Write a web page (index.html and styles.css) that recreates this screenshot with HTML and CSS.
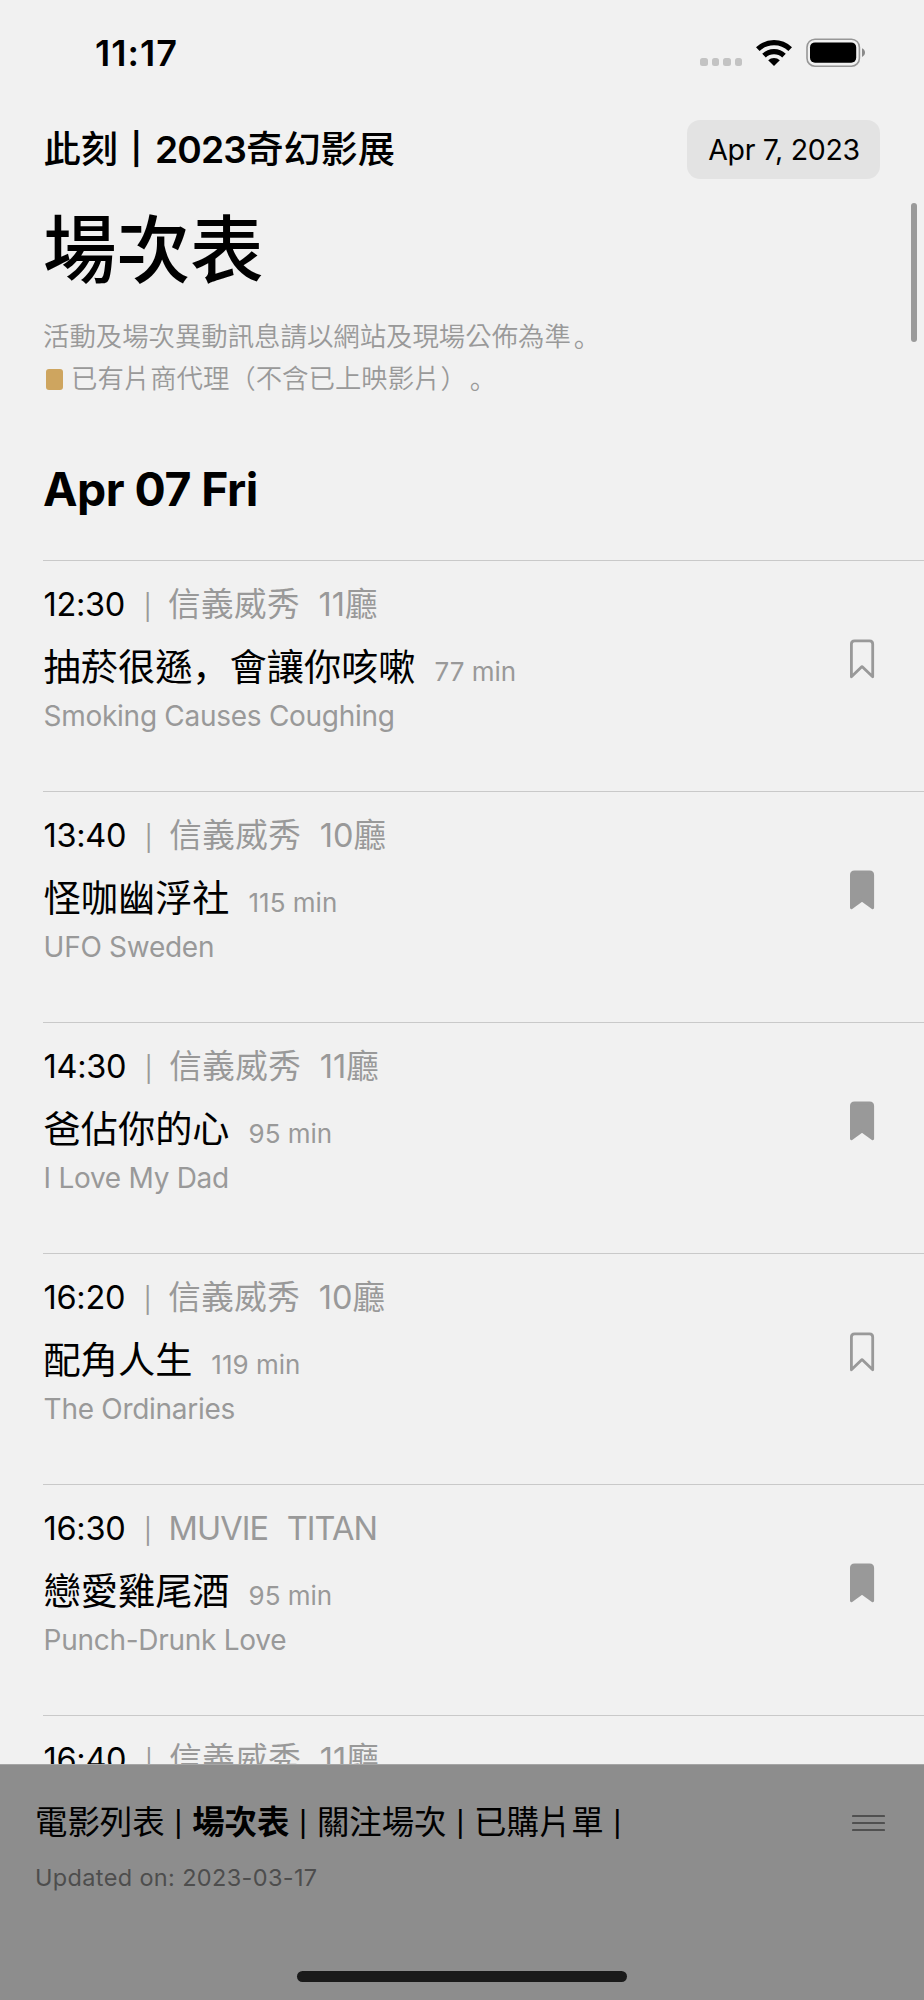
FILE: index.html
```html
<!DOCTYPE html>
<html lang="zh-Hant">
<head>
<meta charset="utf-8">
<title>場次表</title>
<link rel="stylesheet" href="styles.css">
</head>
<body>
<svg class="defs" aria-hidden="true">
  <symbol id="mark" viewBox="0 0 26 40"><path d="M2.4 37.8V5Q2.4 1.8 5.6 1.8H20.5Q23.7 1.8 23.7 5V37.8L13 27.6Z" fill="none" stroke="currentColor" stroke-width="2.8" stroke-linejoin="round"/></symbol>
  <symbol id="mark-fill" viewBox="0 0 26 40"><path d="M2.4 37.8V5Q2.4 1.8 5.6 1.8H20.5Q23.7 1.8 23.7 5V37.8L13 30.2Z" fill="currentColor" stroke="currentColor" stroke-width="2.8" stroke-linejoin="round"/></symbol>
</svg>
<div class="screen">
  <div class="status">
    <span class="clock">11:17</span>
    <span class="dots"><i></i><i></i><i></i><i></i></span>
    <svg class="wifi" viewBox="0 0 36 28"><g fill="none" stroke="#000" stroke-width="5.2"><path d="M1.8 10.2A23.5 23.5 0 0 1 34.2 10.2"/><path d="M8 16.6A14.6 14.6 0 0 1 28 16.6"/></g><path d="M12.2 21.2A8.6 8.6 0 0 1 23.8 21.2L18 27Z"/></svg>
    <svg class="battery" viewBox="0 0 60 30"><rect x="1" y="1.2" width="52.4" height="27" rx="8" fill="none" stroke="#979797" stroke-width="1.6"/><rect x="4" y="4.4" width="46.2" height="20.4" rx="5" /><path d="M56 10.2Q59 11.6 59 14.6T56 19Z" fill="#8a8a8a"/></svg>
  </div>
  <header class="head">
    <div class="brand">此刻<span class="rule">|</span><span class="year">2023</span>奇幻影展</div>
    <div class="date">Apr 7, 2023</div>
  </header>
  <h1>場次表</h1>
  <div class="note">活動及場次異動訊息請以網站及現場公佈為準<span class="sc stop" lang="zh-Hans">。</span></div>
  <div class="note"><i class="chip"></i>已有片商代理（不含已上映影片）<span class="sc stop" lang="zh-Hans">。</span></div>
  <h2>Apr 07 Fri</h2>
  <main class="list">
    <article class="item">
      <div class="slot"><span class="time">12:30</span><span class="bar">|</span><span class="hall">信義威秀</span><span class="room">11廳</span></div>
      <div class="film"><span class="name">抽菸很遜<span class="sc" lang="zh-Hans">，</span>會讓你咳嗽</span><span class="min">77 min</span></div>
      <div class="sub">Smoking Causes Coughing</div>
      <svg class="mark"><use href="#mark"/></svg>
    </article>
    <article class="item">
      <div class="slot"><span class="time">13:40</span><span class="bar">|</span><span class="hall">信義威秀</span><span class="room">10廳</span></div>
      <div class="film"><span class="name">怪咖幽浮社</span><span class="min">115 min</span></div>
      <div class="sub">UFO Sweden</div>
      <svg class="mark"><use href="#mark-fill"/></svg>
    </article>
    <article class="item">
      <div class="slot"><span class="time">14:30</span><span class="bar">|</span><span class="hall">信義威秀</span><span class="room">11廳</span></div>
      <div class="film"><span class="name">爸佔你的心</span><span class="min">95 min</span></div>
      <div class="sub">I Love My Dad</div>
      <svg class="mark"><use href="#mark-fill"/></svg>
    </article>
    <article class="item">
      <div class="slot"><span class="time">16:20</span><span class="bar">|</span><span class="hall">信義威秀</span><span class="room">10廳</span></div>
      <div class="film"><span class="name">配角人生</span><span class="min">119 min</span></div>
      <div class="sub">The Ordinaries</div>
      <svg class="mark"><use href="#mark"/></svg>
    </article>
    <article class="item">
      <div class="slot"><span class="time">16:30</span><span class="bar">|</span><span class="hall latin">MUVIE</span><span class="room latin">TITAN</span></div>
      <div class="film"><span class="name">戀愛雞尾酒</span><span class="min">95 min</span></div>
      <div class="sub">Punch-Drunk Love</div>
      <svg class="mark"><use href="#mark-fill"/></svg>
    </article>
    <article class="item">
      <div class="slot"><span class="time">16:40</span><span class="bar">|</span><span class="hall">信義威秀</span><span class="room">11廳</span></div>
    </article>
  </main>
  <footer class="foot">
    <div class="foot-row">
      <nav class="tabs"><a>電影列表</a><span>|</span><a class="on">場次表</a><span>|</span><a>關注場次</a><span>|</span><a>已購片單</a><span>|</span></nav>
      <svg class="menu" viewBox="0 0 33 18"><path d="M1 2H32M1 9H32M1 16H32" stroke="#505050" stroke-width="2.2" stroke-linecap="round"/></svg>
    </div>
    <div class="updated">Updated on: 2023-03-17</div>
    <div class="home"></div>
  </footer>
  <div class="scroll"></div>
</div>
</body>
</html>
```

FILE: styles.css
```css
* { box-sizing: border-box; }
body { margin: 0; background: #f1f1f1; color: #000; font-family: Inter, "Noto Sans CJK TC", sans-serif; }
.defs { position: absolute; width: 0; height: 0; }
.sc { font-family: "Noto Sans CJK SC", sans-serif; line-height: 1; }
.stop { margin-left: 3px; }
.screen { position: relative; width: 924px; height: 2000px; overflow: hidden; display: flex; flex-direction: column; white-space: nowrap; }

.status { flex: none; height: 120px; padding: 0 58px 0 95px; display: flex; align-items: flex-start; }
.clock { margin-top: 33px; line-height: 40px; font-size: 36px; font-weight: 600; letter-spacing: 1px; }
.dots { display: flex; gap: 4px; margin: 58px 14px 0 auto; }
.dots i { width: 7.5px; height: 8px; border-radius: 2.5px; background: #c3c3c3; }
.wifi { width: 36px; height: 28px; margin: 39px 14px 0 0; }
.battery { width: 60px; height: 30px; margin-top: 37.5px; }

.head { flex: none; height: 59px; padding: 0 44px 0 43.5px; display: flex; justify-content: space-between; align-items: center; }
.brand { line-height: 59px; font-size: 37.2px; font-weight: 500; }
.rule { display: inline-block; width: 37px; text-align: center; font-size: 31px; font-weight: 600; line-height: 1; vertical-align: 3px; }
.year { font-weight: 600; letter-spacing: -.8px; }
.date { width: 193px; height: 59px; padding-left: 1px; border-radius: 13px; background: #e3e3e3; text-align: center; line-height: 59px; font-size: 28.5px; letter-spacing: -.3px; }
h1 { flex: none; margin: 0; padding: 29px 0 0 43px; height: 136px; font-size: 73.5px; line-height: 86px; font-weight: 500; }
.note { flex: none; height: 42px; padding-left: 43px; line-height: 40px; font-size: 26.4px; font-weight: 350; color: #999; display: flex; align-items: center; }
.chip { width: 17px; height: 21px; margin: 2px 8px 0 3px; border-radius: 3px; background: #cea55f; }
h2 { flex: none; margin: 0; padding: 58px 0 0 43px; height: 161px; font-size: 46.3px; line-height: 64px; font-weight: 700; letter-spacing: -.5px; }

.list { flex: none; margin-left: 43px; }
.item { position: relative; height: 231px; border-top: 1px solid #c9c9c9; padding-left: .6px; }
.slot { display: flex; height: 62px; padding-top: 20.5px; line-height: 46px; font-size: 32.5px; font-weight: 385; color: #999; }
.time { color: #000; font-weight: 400; letter-spacing: -.3px; }
.bar { width: 43px; padding: 2px 0 0 2px; text-align: center; font-size: 25px; font-weight: 400; }
.hall { letter-spacing: .5px; }
.room { margin-left: 18.5px; }
.latin { letter-spacing: -.9px; }
.film { display: flex; align-items: baseline; height: 62px; padding-top: 16.5px; line-height: 56px; font-size: 37.2px; }
.min { margin-left: 19px; font-size: 26px; font-weight: 385; color: #999; }
.sub { line-height: 50px; padding-top: 6px; font-size: 28px; font-weight: 380; color: #999; letter-spacing: -.28px; }
.mark { position: absolute; right: 49px; top: 78px; width: 26px; height: 40px; color: #999; }

.foot { position: absolute; left: 0; right: 0; top: 1764px; height: 236px; background: #8d8d8d; border-top: 1px solid #a5a5a5; padding: 33px 39px 0 35px; }
.foot-row { display: flex; justify-content: space-between; align-items: center; height: 50px; }
.tabs { display: flex; padding-top: 1px; line-height: 50px; font-size: 32.4px; font-weight: 385; }
.tabs span { width: 27.6px; padding-top: 1px; text-align: center; font-size: 25px; font-weight: 500; }
.tabs .on { font-weight: 700; }
.menu { width: 33px; height: 18px; }
.updated { margin-top: 12px; line-height: 36px; font-size: 23.5px; color: #4d4d4d; letter-spacing: .35px; }
.home { width: 330px; height: 11px; margin: 75px 0 0 262px; border-radius: 6px; background: #1a1a1a; }
.scroll { position: absolute; left: 911px; top: 203px; width: 6px; height: 139px; border-radius: 3px; background: #9a9a9a; }
```
